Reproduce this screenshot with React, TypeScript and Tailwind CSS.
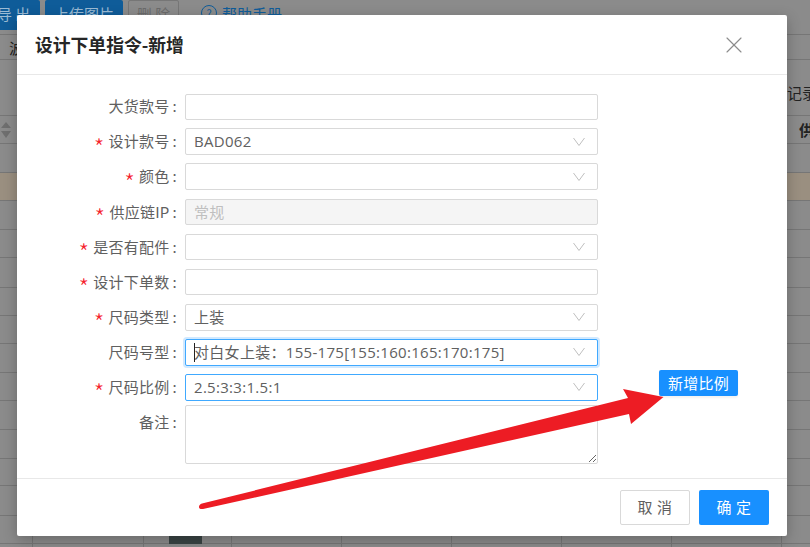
import { X } from 'lucide-react';

const font = 'font-["Noto_Sans_CJK_SC","Noto_Sans",sans-serif]';

type Field = {
  label: string;
  required?: boolean;
  value?: string;
  kind: 'input' | 'select' | 'disabled';
  focus?: 'ring' | 'border';
  height: string;
};

const fields: Field[] = [
  { label: '大货款号', kind: 'input', height: 'h-[26px]' },
  { label: '设计款号', required: true, value: 'BAD062', kind: 'select', height: 'h-[27px]' },
  { label: '颜色', required: true, kind: 'select', height: 'h-[27px]' },
  { label: '供应链IP', required: true, value: '常规', kind: 'disabled', height: 'h-[26px]' },
  { label: '是否有配件', required: true, kind: 'select', height: 'h-[26px]' },
  { label: '设计下单数', required: true, kind: 'input', height: 'h-[26px]' },
  { label: '尺码类型', required: true, value: '上装', kind: 'select', height: 'h-[27px]' },
  { label: '尺码号型', value: '对白女上装：155-175[155:160:165:170:175]', kind: 'select', focus: 'ring', height: 'h-[27px]' },
  { label: '尺码比例', required: true, value: '2.5:3:3:1.5:1', kind: 'select', focus: 'border', height: 'h-[27px]' },
];

// 蒙层后面的表格线
const rowLines = [34, 59, 115, 143, 172, 200, 229, 257, 287, 315, 343, 372, 400, 429, 458, 485, 515, 543];
const colLines = [32, 143, 231, 341, 451, 561, 671, 781];

const Backdrop = () => (
  <div className="absolute inset-0 overflow-hidden bg-[#8b8b8b]">
    <div className="absolute left-0 top-[172px] h-[28px] w-full bg-[#9a8f80]" />
    {rowLines.map((y) => (
      <div key={y} className="absolute left-0 h-px w-full bg-[#767676]" style={{ top: y }} />
    ))}
    {colLines.map((x) => (
      <div key={x} className="absolute top-[536px] h-[11px] w-px bg-[#767676]" style={{ left: x }} />
    ))}
    <div className="absolute left-[169px] top-[536px] h-[8px] w-[33px] bg-[#3a4444]" />

    {/* 工具栏 */}
    <div className="absolute left-0 top-0 flex h-[30px] items-start text-[15px] leading-[28px]">
      <div className="h-[30px] w-[40px] whitespace-nowrap rounded-r-[2px] bg-[#0f5c99] indent-[-3px] text-[#9bbbd4]">导 出</div>
      <div className="ml-[5px] h-[30px] w-[78px] rounded-[2px] bg-[#0f5c99] text-center text-[#9bbbd4]">上传图片</div>
      <div className="ml-[5px] h-[30px] w-[51px] rounded-[2px] border border-[#767676] text-center leading-[26px] text-[#6b6b6b]">删 除</div>
      <div className="ml-[22px] flex h-[30px] text-[#0f5c99]">
        <span className="mr-[5px] mt-[5px] flex h-[16px] w-[16px] items-center justify-center rounded-full border border-[#0f5c99] text-[11px] leading-none">?</span>
        帮助手册
      </div>
    </div>

    <span className="absolute left-[9px] top-[37px] text-[15px] leading-[22px] text-[#222]">波</span>
    <span className="absolute left-[787px] top-[82px] whitespace-nowrap text-[15px] leading-[22px] text-[#222]">记录</span>
    <span className="absolute left-[799px] top-[119px] text-[15px] font-bold leading-[22px] text-[#222]">供</span>
    {/* 排序箭头 */}
    <svg className="absolute left-0 top-[120px]" width="14" height="20" viewBox="0 0 14 20">
      <path d="M1 8 L6 2 L11 8 Z M1 11 L11 11 L6 18 Z" fill="#6f6f6f" />
    </svg>
  </div>
);

const Chevron = () => (
  <svg className="absolute right-[12px] top-1/2 -translate-y-1/2" width="12" height="9" viewBox="0 0 12 9">
    <path d="M0.5 0.5 L6 8 L11.5 0.5" fill="none" stroke="#bfbfbf" strokeWidth="1" />
  </svg>
);

const FormRow = ({ field }: { field: Field }) => {
  const borderClass =
    field.focus === 'ring'
      ? 'border-[#40a9ff] shadow-[0_0_0_2px_rgba(24,144,255,0.2)]'
      : field.focus === 'border'
        ? 'border-[#40a9ff]'
        : 'border-[#d9d9d9]';
  const bgClass = field.kind === 'disabled' ? 'bg-[#f5f5f5] text-[#bfbfbf]' : 'bg-white text-[#606060]';

  return (
    <div className="flex h-[27px] items-center">
      <div className="flex w-[168px] shrink-0 items-center justify-end text-[15px] tracking-[0.25px] text-[#606060]">
        {field.required && <span className="mr-[4px] translate-y-[5px] text-[24px] font-light leading-none text-[#f5222d]">*</span>}
        <span className="whitespace-nowrap">{field.label}</span>
        <span className="ml-[3px] mr-[8px]">:</span>
      </div>
      <div className={`relative flex w-[413px] items-center rounded-[2px] border pl-[8px] text-[15px] ${field.height} ${borderClass} ${bgClass}`}>
        {field.focus === 'ring' && <span className="absolute left-[8px] top-[3px] h-[19px] w-px bg-[#222]" />}
        <span className='whitespace-nowrap font-["Open_Sans","Noto_Sans_CJK_SC",sans-serif] tracking-[0.3px]'>{field.value}</span>
        {field.kind === 'select' && <Chevron />}
      </div>
    </div>
  );
};

const App = () => {
  return (
    <div className={`relative h-[547px] w-[810px] overflow-hidden ${font}`}>
      <Backdrop />

      {/* モーダル */}
      <div className="absolute left-[17px] top-[15px] flex h-[521px] w-[770px] flex-col rounded-[2px] bg-white shadow-[0_4px_14px_rgba(0,0,0,0.25)]">
        <div className="flex h-[60px] shrink-0 items-center justify-between border-b border-[#e8e8e8] pl-[18px] pr-[39px]">
          <span className="text-[17.8px] font-bold text-[#262626]">设计下单指令-新增</span>
          <X className="text-[#8c8c8c]" size={28} strokeWidth={1} />
        </div>

        <div className="flex grow flex-col gap-[8.1px] pt-[18px]">
          {fields.map((f) => (
            <FormRow key={f.label} field={f} />
          ))}
          <div className="-mt-[4px] flex items-start">
            <div className="flex w-[168px] shrink-0 items-start justify-end pt-[6px] text-[15px] leading-[22px] tracking-[0.25px] text-[#606060]">
              备注<span className="ml-[3px] mr-[8px]">:</span>
            </div>
            <div className="relative h-[59px] w-[413px] rounded-[2px] border border-[#d9d9d9] bg-white">
              <svg className="absolute bottom-0 right-0" width="9" height="9" viewBox="0 0 9 9">
                <path d="M1 8 L8 1 M5 8 L8 5" stroke="#666" strokeWidth="1" />
              </svg>
            </div>
          </div>
        </div>

        <div className="flex h-[58px] shrink-0 items-center justify-end gap-[9px] border-t border-[#e8e8e8] pr-[18px]">
          <button className="h-[35px] w-[70px] rounded-[2px] border border-[#d9d9d9] bg-white text-[15px] tracking-[0.5px] text-[#606060]">取 消</button>
          <button className="h-[35px] w-[70px] rounded-[2px] bg-[#1890ff] text-[15px] tracking-[0.5px] text-white">确 定</button>
        </div>
      </div>

      {/* 新增比例ボタン */}
      <button className="absolute left-[659px] top-[370px] h-[26px] w-[79px] rounded-[2px] bg-[#1890ff] text-[15px] tracking-[0.25px] text-white shadow-[0_2px_2px_rgba(0,0,0,0.05)]">新增比例</button>

      {/* 赤い矢印 */}
      <svg className="absolute left-0 top-0" width="810" height="547" viewBox="0 0 810 547">
        <path
          d="M199 507 Q199 504.5 202 503.5 L628 398 L623 389 L663.5 397 L631 424 L629 414 L203 509 Q199 509.5 199 507 Z"
          fill="#ed1c24"
        />
      </svg>
    </div>
  );
};

export default App;
